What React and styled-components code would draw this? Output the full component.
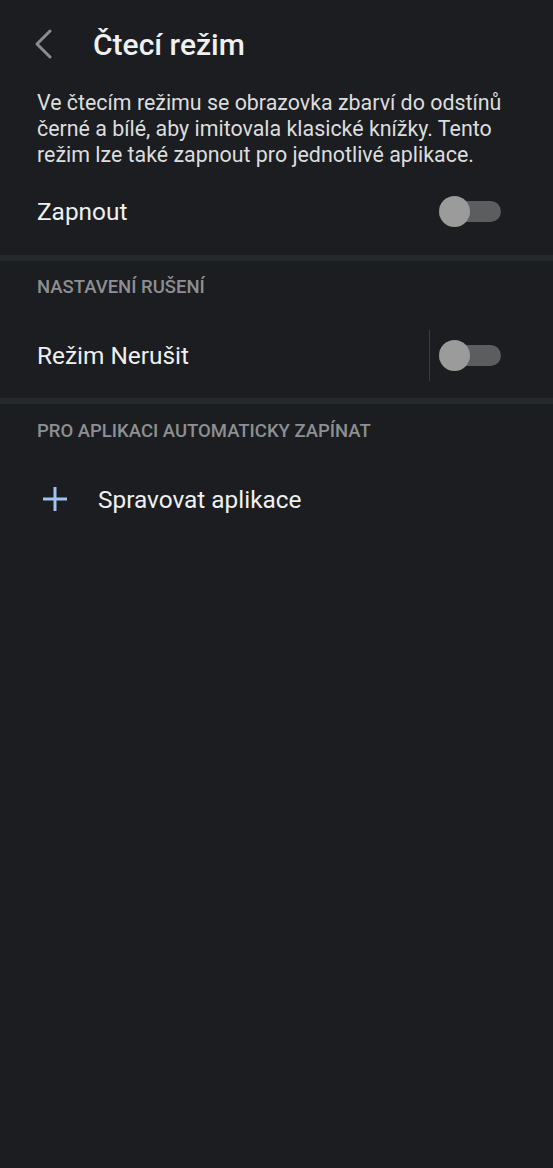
import React from 'react';
import styled, { createGlobalStyle } from 'styled-components';

const colors = {
    bg: '#1b1d20',
    band: '#26292c',
    text: '#eef0f2',
    body: '#dcdddf',
    muted: '#8d8f92',
    accent: '#9fc3f3',
    track: '#5c5d5f',
    thumb: '#9b9b9c',
};

const GlobalStyle = createGlobalStyle`
    html, body {
        margin: 0;
        padding: 0;
        background-color: ${colors.bg};
    }
    body {
        font-family: Roboto, "Noto Sans", "Liberation Sans", sans-serif;
        -webkit-font-smoothing: antialiased;
    }
`;

const Screen = styled.div`
    width: 553px;
    min-height: 1168px;
    background-color: ${colors.bg};
    display: flex;
    flex-direction: column;
`;

const Header = styled.header`
    height: 88px;
    display: flex;
    align-items: center;
    padding-left: 33px;
    box-sizing: border-box;
`;

const BackButton = styled.div`
    width: 20px;
    height: 30px;
    display: flex;
    align-items: center;
    margin-right: 40px;
    cursor: pointer;
`;

const Title = styled.h1`
    margin: 0;
    font-size: 30px;
    font-weight: 500;
    color: ${colors.text};
`;

const Description = styled.p`
    margin: 2px 0 0 0;
    padding: 0 37px;
    font-size: 21.4px;
    line-height: 26px;
    color: ${colors.body};
`;

const Row = styled.div`
    height: ${props => props.height}px;
    display: flex;
    align-items: center;
    padding: 0 52px 0 37px;
    box-sizing: border-box;
`;

const RowLabel = styled.span`
    flex: 1;
    font-size: 24.4px;
    color: ${colors.text};
`;

const ActionLabel = styled.span`
    font-size: 24.4px;
    color: ${colors.text};
    margin-left: 30px;
`;

const Band = styled.div`
    height: 6px;
    background-color: ${colors.band};
`;

const SectionTitle = styled.div`
    height: ${props => props.height}px;
    display: flex;
    align-items: center;
    padding-left: 37px;
    font-size: 18.5px;
    font-weight: 500;
    color: ${colors.muted};
`;

const Separator = styled.div`
    width: 1px;
    height: 51px;
    background-color: #3a3c3f;
    margin-right: 10px;
`;

const Track = styled.div`
    position: relative;
    width: 61px;
    height: 21px;
    border-radius: 11px;
    background-color: ${colors.track};
    display: flex;
    align-items: center;
`;

const Thumb = styled.div`
    position: absolute;
    left: -1px;
    width: 31px;
    height: 31px;
    border-radius: 50%;
    background-color: ${colors.thumb};
`;

const PlusIcon = styled.div`
    width: 26px;
    height: 26px;
    margin-left: 5px;
    display: flex;
`;

const Switch = () => (
    <Track>
        <Thumb />
    </Track>
);

export default function App() {
    return (
        <Screen>
            <GlobalStyle />
            <Header>
                <BackButton>
                    <svg width="20" height="30" viewBox="0 0 20 30">
                        <path d="M17 2 L4 15 L17 28" fill="none" stroke="#8a8b8d" strokeWidth="3" strokeLinecap="round" strokeLinejoin="round" />
                    </svg>
                </BackButton>
                <Title>Čtecí režim</Title>
            </Header>
            <Description>
                Ve čtecím režimu se obrazovka zbarví do odstínů černé a bílé, aby imitovala klasické knížky. Tento režim lze také zapnout pro jednotlivé aplikace.
            </Description>
            <Row height={87}>
                <RowLabel>Zapnout</RowLabel>
                <Switch />
            </Row>
            <Band />
            <SectionTitle height={52}>NASTAVENÍ RUŠENÍ</SectionTitle>
            <Row height={85}>
                <RowLabel>Režim Nerušit</RowLabel>
                <Separator />
                <Switch />
            </Row>
            <Band />
            <SectionTitle height={54}>PRO APLIKACI AUTOMATICKY ZAPÍNAT</SectionTitle>
            <Row height={82}>
                <PlusIcon>
                    <svg width="26" height="26" viewBox="0 0 26 26">
                        <path d="M13 1 V25 M1 13 H25" stroke={colors.accent} strokeWidth="3" />
                    </svg>
                </PlusIcon>
                <ActionLabel>Spravovat aplikace</ActionLabel>
            </Row>
        </Screen>
    );
}
